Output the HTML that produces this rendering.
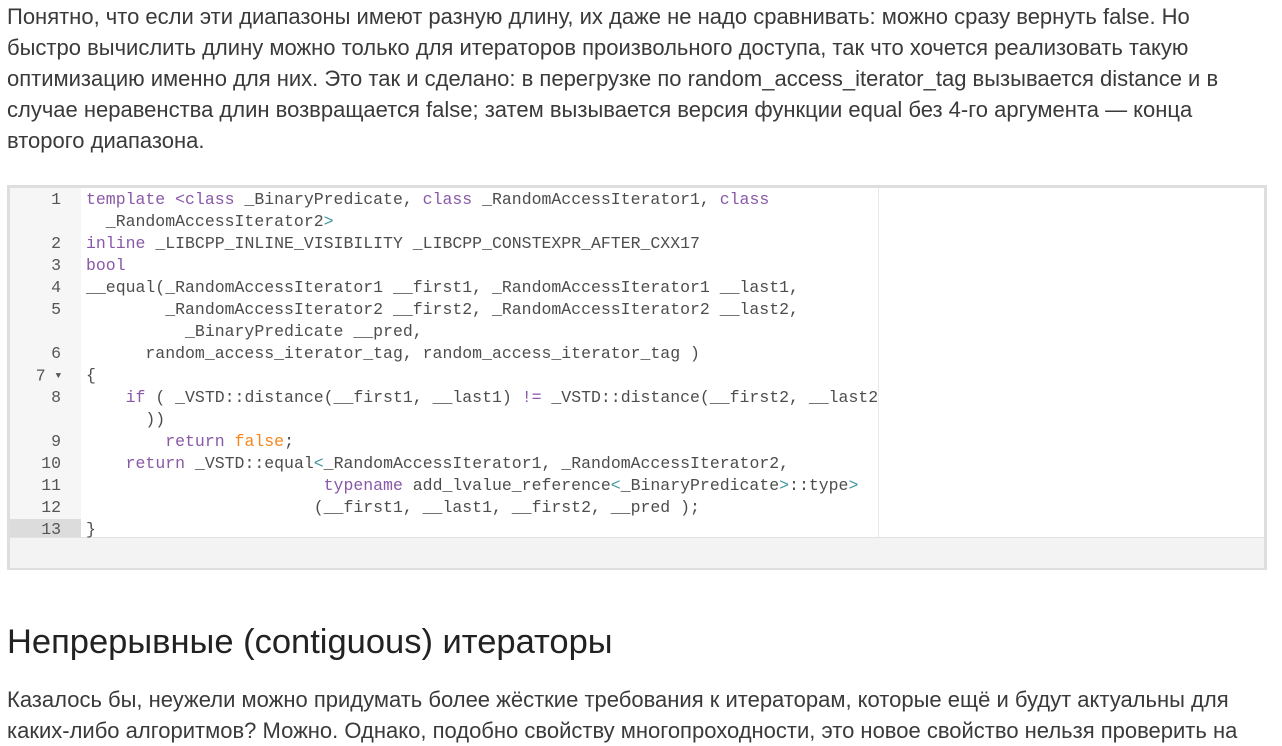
<!DOCTYPE html>
<html><head><meta charset="utf-8">
<style>
body{margin:0;background:#fff;width:1282px;height:745px;overflow:hidden;position:relative;font-family:"Liberation Sans","DejaVu Sans",sans-serif;color:#3a3a3a}
.p{position:absolute;left:7px;font-size:22px;white-space:nowrap;line-height:31px}
.box{position:absolute;left:7px;top:185px;width:1254px;height:379px;border:3px solid #dedede;background:#fff}
.gut{position:absolute;left:0;top:0;width:71px;height:349px;background:#f6f6f6}
.bot{position:absolute;left:0;top:349px;width:1254px;height:30px;background:#f3f3f3;border-top:1px solid #e2e2e2}
.margin{position:absolute;left:868px;top:0;width:1px;height:349px;background:#e6e9ec}
.r{position:absolute;left:0;height:22px;line-height:22px;font-family:"Liberation Mono","DejaVu Sans Mono",monospace;font-size:16.5px;white-space:pre;color:#4d4d4c}
.n{position:absolute;left:0;width:51px;text-align:right;color:#555}
.c{position:absolute;left:76px}
.k{color:#8959a8}.o{color:#f5871f}.t{color:#3e999f}
</style></head><body>
<div class="p" style="top:1px">Понятно, что если эти диапазоны имеют разную длину, их даже не надо сравнивать: можно сразу вернуть false. Но</div>
<div class="p" style="top:32px">быстро вычислить длину можно только для итераторов произвольного доступа, так что хочется реализовать такую</div>
<div class="p" style="top:63px">оптимизацию именно для них. Это так и сделано: в перегрузке по random_access_iterator_tag вызывается distance и в</div>
<div class="p" style="top:94px">случае неравенства длин возвращается false; затем вызывается версия функции equal без 4-го аргумента — конца</div>
<div class="p" style="top:125px">второго диапазона.</div>

<div class="box">
<div class="gut"></div>
<div style="position:absolute;left:0;top:331px;width:71px;height:18px;background:#dcdcdc"></div>
<div class="margin"></div>
<div class="bot"></div>
<div class="r" style="top:1px"><span class="n">1</span><span class="c"><span class="k">template &lt;class</span> _BinaryPredicate, <span class="k">class</span> _RandomAccessIterator1, <span class="k">class</span></span></div>
<div class="r" style="top:23px"><span class="c">  _RandomAccessIterator2<span class="t">&gt;</span></span></div>
<div class="r" style="top:45px"><span class="n">2</span><span class="c"><span class="k">inline</span> _LIBCPP_INLINE_VISIBILITY _LIBCPP_CONSTEXPR_AFTER_CXX17</span></div>
<div class="r" style="top:67px"><span class="n">3</span><span class="c"><span class="k">bool</span></span></div>
<div class="r" style="top:89px"><span class="n">4</span><span class="c">__equal(_RandomAccessIterator1 __first1, _RandomAccessIterator1 __last1,</span></div>
<div class="r" style="top:111px"><span class="n">5</span><span class="c">        _RandomAccessIterator2 __first2, _RandomAccessIterator2 __last2,</span></div>
<div class="r" style="top:133px"><span class="c">          _BinaryPredicate __pred,</span></div>
<div class="r" style="top:155px"><span class="n">6</span><span class="c">      random_access_iterator_tag, random_access_iterator_tag )</span></div>
<div class="r" style="top:177px"><span class="n">7 <span style="font-size:9px;vertical-align:middle">▼</span></span><span class="c">{</span></div>
<div class="r" style="top:199px"><span class="n">8</span><span class="c">    <span class="k">if</span> ( _VSTD::distance(__first1, __last1) <span class="k">!=</span> _VSTD::distance(__first2, __last2</span></div>
<div class="r" style="top:221px"><span class="c">      ))</span></div>
<div class="r" style="top:243px"><span class="n">9</span><span class="c">        <span class="k">return</span> <span class="o">false</span>;</span></div>
<div class="r" style="top:265px"><span class="n">10</span><span class="c">    <span class="k">return</span> _VSTD::equal<span class="t">&lt;</span>_RandomAccessIterator1, _RandomAccessIterator2,</span></div>
<div class="r" style="top:287px"><span class="n">11</span><span class="c">                        <span class="k">typename</span> add_lvalue_reference<span class="t">&lt;</span>_BinaryPredicate<span class="t">&gt;</span>::type<span class="t">&gt;</span></span></div>
<div class="r" style="top:309px"><span class="n">12</span><span class="c">                       (__first1, __last1, __first2, __pred );</span></div>
<div class="r" style="top:331px"><span class="n">13</span><span class="c">}</span></div>
</div>

<div style="position:absolute;left:7px;top:619px;font-size:34.5px;color:#222;white-space:nowrap;line-height:46px">Непрерывные (contiguous) итераторы</div>
<div class="p" style="top:684px">Казалось бы, неужели можно придумать более жёсткие требования к итераторам, которые ещё и будут актуальны для</div>
<div class="p" style="top:715px">каких-либо алгоритмов? Можно. Однако, подобно свойству многопроходности, это новое свойство нельзя проверить на</div>
</body></html>
